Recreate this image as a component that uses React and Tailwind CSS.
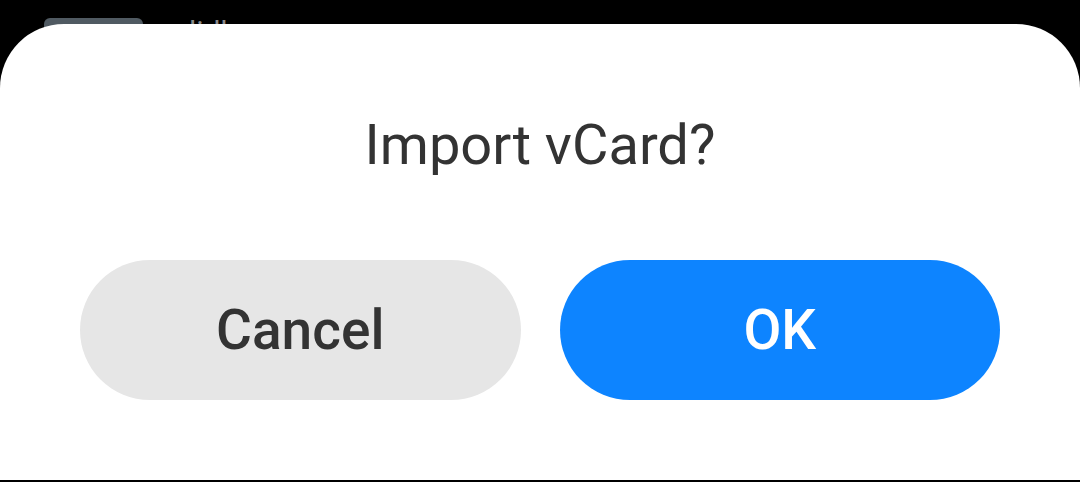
import React from 'react';

function App() {
  return (
    <div className="relative h-[482px] w-[1080px] overflow-hidden bg-black" style={{ fontFamily: 'Roboto, "Noto Sans", sans-serif' }}>
      {/* Screen behind the sheet */}
      <div className="absolute left-0 top-0 flex items-start gap-[46px] pl-[44px] pt-[18px]">
        <div className="h-[40px] w-[99px] rounded-[6px] bg-[#505a62]"></div>
        <span className="-mt-[1px] text-[30px] leading-[30px] text-[#8a8a8a]">lidk</span>
      </div>

      {/* Bottom sheet */}
      <div className="relative mt-[24px] flex h-[456px] flex-col items-center rounded-t-[64px] bg-white">
        <h1 className="mt-[88px] text-[56px] leading-[66px] font-normal text-[#333333]">Import vCard?</h1>
        <div className="mt-[82px] flex w-full gap-[39px] px-[80px]">
          <button className="h-[140px] flex-1 rounded-full bg-[#e6e6e6] text-[55px] font-medium text-[#333333]">
            Cancel
          </button>
          <button className="h-[140px] flex-1 rounded-full bg-[#0d84ff] text-[55px] font-medium text-white">
            OK
          </button>
        </div>
      </div>
    </div>
  );
}

export default App;
